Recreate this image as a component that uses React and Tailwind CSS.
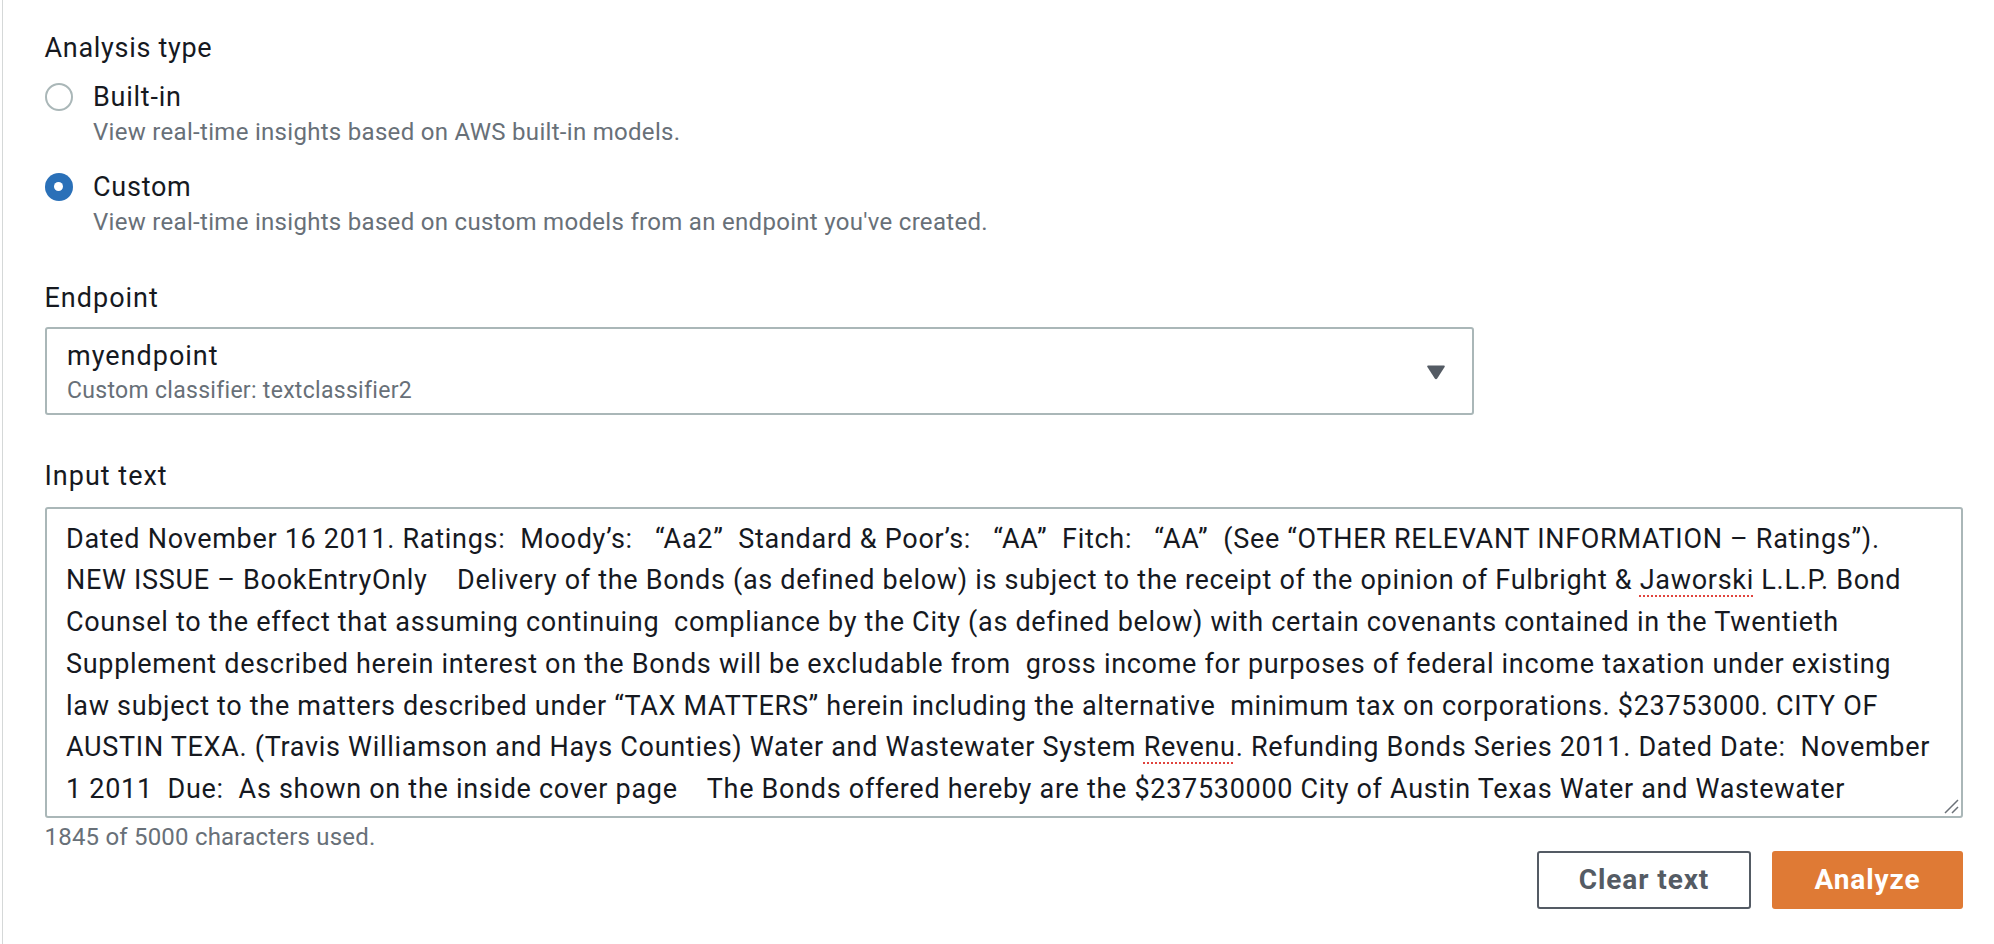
import React, { useState } from 'react';

// Text shown inside the input box, one entry per visual line (keeps wrapping identical)
const inputLines = [
  ['Dated November 16 2011. Ratings:  Moody’s:   “Aa2”  Standard & Poor’s:   “AA”  Fitch:   “AA”  (See “OTHER RELEVANT INFORMATION – Ratings”).'],
  ['NEW ISSUE – BookEntryOnly    Delivery of the Bonds (as defined below) is subject to the receipt of the opinion of Fulbright & ', { typo: 'Jaworski' }, ' L.L.P. Bond'],
  ['Counsel to the effect that assuming continuing  compliance by the City (as defined below) with certain covenants contained in the Twentieth'],
  ['Supplement described herein interest on the Bonds will be excludable from  gross income for purposes of federal income taxation under existing'],
  ['law subject to the matters described under “TAX MATTERS” herein including the alternative  minimum tax on corporations. $23753000. CITY OF'],
  ['AUSTIN TEXA. (Travis Williamson and Hays Counties) Water and Wastewater System ', { typo: 'Revenu' }, '. Refunding Bonds Series 2011. Dated Date:  November'],
  ['1 2011  Due:  As shown on the inside cover page    The Bonds offered hereby are the $237530000 City of Austin Texas Water and Wastewater'],
];

const Radio = ({ checked }) =>
  checked ? (
    <span className="w-[28px] h-[28px] rounded-full bg-[#2a70b8] flex items-center justify-center shrink-0">
      <span className="w-[9px] h-[9px] rounded-full bg-white" />
    </span>
  ) : (
    <span className="w-[28px] h-[28px] rounded-full border-[2.5px] border-[#aab7b8] bg-white shrink-0" />
  );

const RadioOption = ({ checked, label, description, onSelect }) => (
  <div className="cursor-pointer" onClick={onSelect}>
    <div className="flex items-center h-[32px] gap-[20.5px]">
      <Radio checked={checked} />
      <span className="text-[27px] leading-[32px] tracking-[0.75px] text-[#16191f]">{label}</span>
    </div>
    <div className="mt-[4px] pl-[48.5px] text-[24px] leading-[30px] tracking-[0.3px] text-[#687078]">
      {description}
    </div>
  </div>
);

const App = () => {
  const [analysisType, setAnalysisType] = useState('custom');

  return (
    <div className="min-h-screen bg-white font-['Roboto',sans-serif] ml-[2px] border-l border-[#d5d8d8] pl-[41.5px] pr-[31px] pt-[32px]">
      <div className="text-[27px] leading-[32px] tracking-[0.7px] text-[#16191f]">Analysis type</div>

      {/* Radio group */}
      <div className="mt-[17px] flex flex-col gap-[23.5px]">
        <RadioOption
          checked={analysisType === 'builtin'}
          label="Built-in"
          description="View real-time insights based on AWS built-in models."
          onSelect={() => setAnalysisType('builtin')}
        />
        <RadioOption
          checked={analysisType === 'custom'}
          label="Custom"
          description="View real-time insights based on custom models from an endpoint you've created."
          onSelect={() => setAnalysisType('custom')}
        />
      </div>

      {/* Endpoint select */}
      <div className="mt-[45px] text-[27px] leading-[32px] tracking-[1px] text-[#16191f]">Endpoint</div>
      <div className="mt-[13px] h-[88px] w-[1429px] border-2 border-[#aab7b8] rounded-[3px] flex items-center pl-[20.5px] pr-[26px]">
        <div className="flex-1 self-stretch pt-[11px] flex flex-col gap-[4.5px]">
          <span className="text-[27px] leading-[32px] tracking-[1px] text-[#16191f]">myendpoint</span>
          <span className="text-[23px] leading-[30px] tracking-[0.3px] text-[#687078]">Custom classifier: textclassifier2</span>
        </div>
        <svg width="20" height="16" viewBox="0 0 20 16" className="mt-[3px]">
          <path d="M2 1.5 H18 Q19.5 1.5 18.6 3 L11.2 14.6 Q10 16 8.8 14.6 L1.4 3 Q0.5 1.5 2 1.5 Z" fill="#545b64" />
        </svg>
      </div>

      {/* Input text */}
      <div className="mt-[45.5px] text-[27px] leading-[32px] tracking-[1px] text-[#16191f]">Input text</div>
      <div className="relative mt-[15px] h-[311px] border-2 border-[#aab7b8] rounded-[3px] pl-[19.5px] pt-[9.5px] overflow-hidden">
        {inputLines.map((segments, i) => (
          <div key={i} className="whitespace-pre text-[27px] leading-[41.75px] tracking-[0.7px] text-[#16191f]">
            {segments.map((seg, j) =>
              typeof seg === 'string' ? (
                <span key={j}>{seg}</span>
              ) : (
                <span key={j} className="underline decoration-dotted decoration-[#e0443e] decoration-2 underline-offset-[6px]">
                  {seg.typo}
                </span>
              )
            )}
          </div>
        ))}
        <svg width="18" height="18" viewBox="0 0 18 18" className="absolute right-[1px] bottom-[1px]">
          <path d="M3 16 L16 3 M10 16 L16 10" stroke="#6b7178" strokeWidth="1.5" />
        </svg>
      </div>

      <div className="mt-[4.5px] text-[24px] leading-[28px] tracking-[0.2px] text-[#687078]">1845 of 5000 characters used.</div>

      {/* Actions */}
      <div className="mt-[0.5px] flex justify-end gap-[21px]">
        <button className="w-[214px] h-[58px] border-2 border-[#545b64] rounded-[3px] bg-white text-[28px] font-bold tracking-[0.9px] text-[#545b64]">
          Clear text
        </button>
        <button className="w-[191px] h-[58px] rounded-[3px] bg-[#df7a35] text-[28px] font-bold tracking-[0.9px] text-white">
          Analyze
        </button>
      </div>
    </div>
  );
};

export default App;
